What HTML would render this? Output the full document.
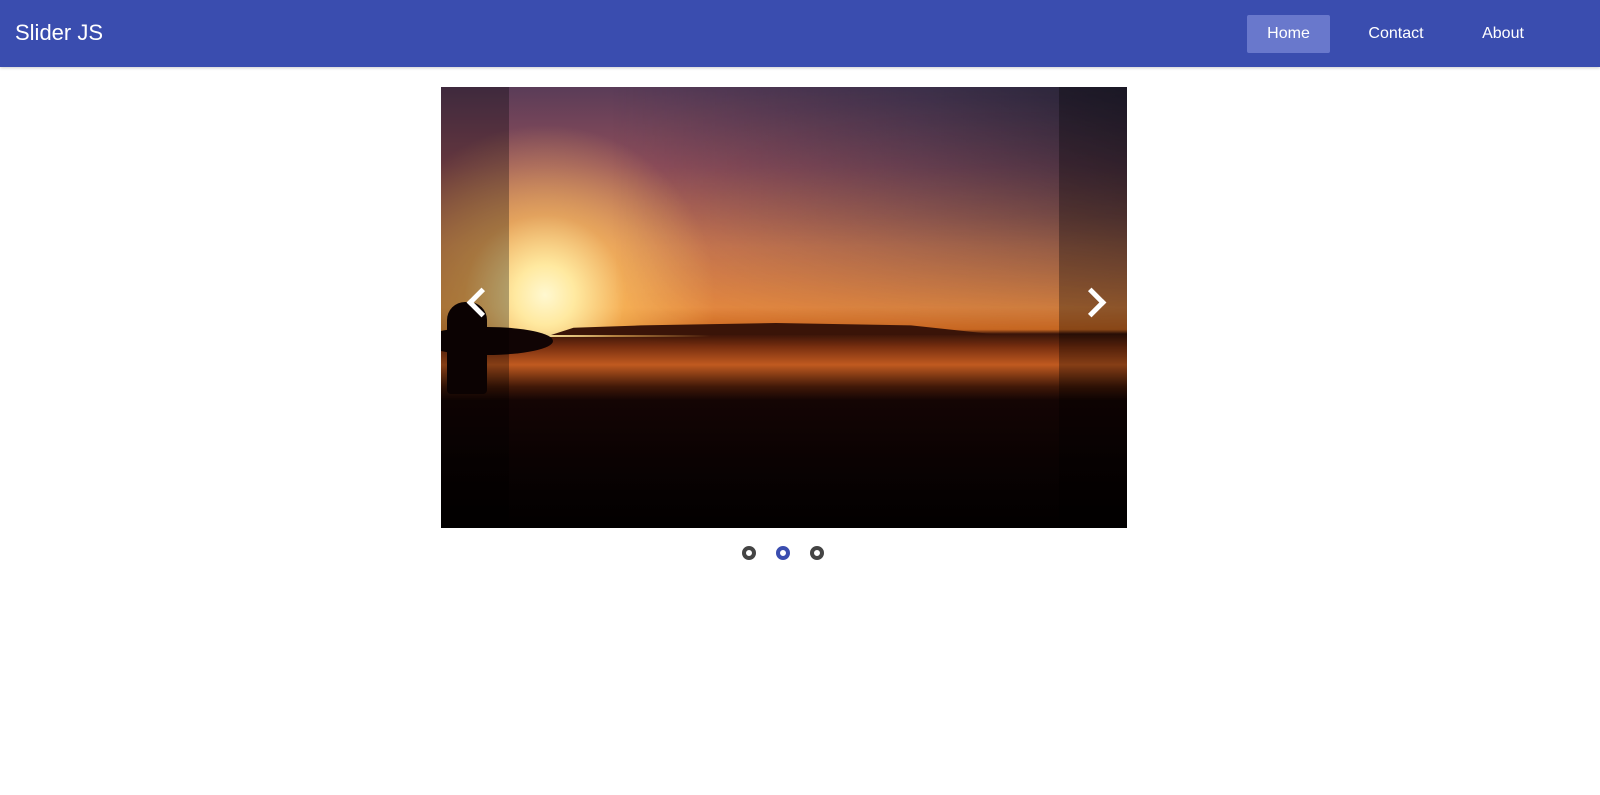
<!DOCTYPE html>
<html><head><style>
body{margin:0;width:1600px;height:795px;background:#fff;font-family:"Liberation Sans",sans-serif;overflow:hidden}
.nav{height:67px;background:#3a4daf;position:relative;box-shadow:0 1px 3px rgba(0,0,0,.2)}
.brand{position:absolute;left:15px;top:20px;color:#fff;font-size:22px}
.nav a{position:absolute;top:15px;height:38px;line-height:38px;color:#fff;font-size:16px;text-align:center;border-radius:2px}
.slider{position:absolute;left:441px;top:87px;width:686px;height:441px;overflow:hidden;
background:linear-gradient(180deg,#5a3c58 0%,#904e5a 18%,#d07a50 36%,#e88a40 50%,#d06a20 55%,#3a1408 56%,#7a3010 59%,#c05a20 63%,#401808 68%,#140504 71%,#0a0202 85%,#020000 100%);}
.sun{position:absolute;left:0;top:0;width:686px;height:250px;background:radial-gradient(circle 170px at 104px 208px,#fff8d0 0,#ffe9a0 30px,rgba(255,200,100,.6) 80px,rgba(255,160,60,0) 170px)}
.sky-r{position:absolute;left:0;top:0;width:686px;height:260px;background:linear-gradient(to right,rgba(30,35,60,0) 25%,rgba(30,35,60,.5) 70%,rgba(25,28,45,.8)),linear-gradient(to bottom,rgba(0,0,0,0) 0,rgba(0,0,0,0) 100%);-webkit-mask-image:linear-gradient(to bottom,#000 0,rgba(0,0,0,.6) 50%,transparent 100%);mask-image:linear-gradient(to bottom,#000 0,rgba(0,0,0,.6) 50%,transparent 100%)}
.land{position:absolute;left:110px;top:236px;width:450px;height:12px;background:#3a1408;clip-path:polygon(0 100%,5% 40%,20% 20%,50% 0,80% 20%,100% 100%)}
.board{position:absolute;left:-20px;top:240px;width:132px;height:28px;background:#100404;border-radius:50%}
.surfer{position:absolute;left:6px;top:215px;width:40px;height:92px;background:#100404;border-radius:18px 18px 4px 4px}
.side{position:absolute;top:0;width:68px;height:441px;background:rgba(0,0,0,.3)}
.arr{position:absolute;top:205px;width:16px;height:16px;border-top:5px solid #fff;border-right:5px solid #fff}
.dots span{position:absolute;top:546px;width:6px;height:6px;border:4px solid #444;border-radius:50%;background:#fff}
</style></head><body>
<div class="nav"><div class="brand">Slider JS</div>
<a style="left:1247px;width:83px;background:#6978cc">Home</a>
<a style="left:1356px;width:80px">Contact</a>
<a style="left:1470px;width:66px">About</a></div>
<div class="slider"><div class="sun"></div><div class="sky-r"></div><div class="land"></div><div class="board"></div><div class="surfer"></div>
<div class="side" style="left:0"></div><div class="side" style="right:0"></div>
<div class="arr" style="left:30px;transform:rotate(-135deg)"></div>
<div class="arr" style="left:640px;transform:rotate(45deg)"></div></div>
<div class="dots"><span style="left:742px"></span><span style="left:776px;border-color:#3a4daf"></span><span style="left:810px"></span></div>
</body></html>
